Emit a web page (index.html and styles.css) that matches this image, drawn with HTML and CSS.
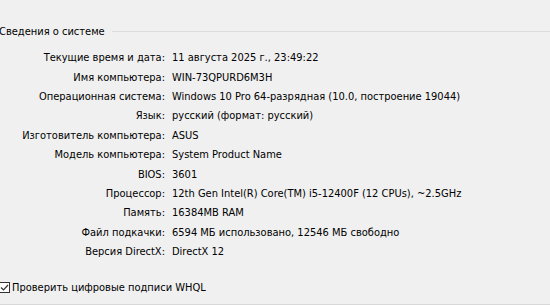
FILE: index.html
```html
<!DOCTYPE html>
<html>
<head>
    <title>Сведения о системе</title>
    <link rel="stylesheet" href="styles.css">
</head>
<body>

<div class="sysinfo">
    <div class="group-title">
        <span>Сведения о системе</span>
        <div class="group-line"></div>
    </div>

    <div class="info-grid">
        <div class="label">Текущие время и дата:</div>
        <div class="value">11 августа 2025 г., 23:49:22</div>

        <div class="label">Имя компьютера:</div>
        <div class="value">WIN-73QPURD6M3H</div>

        <div class="label">Операционная система:</div>
        <div class="value">Windows 10 Pro 64-разрядная (10.0, построение 19044)</div>

        <div class="label">Язык:</div>
        <div class="value">русский (формат: русский)</div>

        <div class="label">Изготовитель компьютера:</div>
        <div class="value">ASUS</div>

        <div class="label">Модель компьютера:</div>
        <div class="value">System Product Name</div>

        <div class="label">BIOS:</div>
        <div class="value">3601</div>

        <div class="label">Процессор:</div>
        <div class="value">12th Gen Intel(R) Core(TM) i5-12400F (12 CPUs), ~2.5GHz</div>

        <div class="label">Память:</div>
        <div class="value">16384MB RAM</div>

        <div class="label">Файл подкачки:</div>
        <div class="value">6594 МБ использовано, 12546 МБ свободно</div>

        <div class="label">Версия DirectX:</div>
        <div class="value">DirectX 12</div>
    </div>

    <div class="whql">
        <span class="checkbox">
            <svg width="11" height="11" viewBox="0 0 11 11">
                <path d="M2 5.5 L4.5 8 L9 3" fill="none" stroke="#333" stroke-width="1.2"/>
            </svg>
        </span>
        <label>Проверить цифровые подписи WHQL</label>
    </div>
</div>

</body>
</html>
```

FILE: styles.css
```css
body {
    margin: 0;
    background-color: #f0f0f0;
    font-family: "DejaVu Sans Condensed", "DejaVu Sans", sans-serif;
    font-stretch: condensed;
    font-size: 11px;
    color: #000;
    overflow: hidden;
}
.sysinfo {
    height: 305px;
    box-sizing: border-box;
    border-bottom: 1px solid #d8d8d8;
    padding-top: 23px;
}
.group-title {
    display: flex;
    align-items: center;
    margin-left: -1px;
    height: 16px;
}
.group-title span {
    padding-right: 7px;
}
.group-line {
    flex: 1;
    border-top: 1px solid #dcdcdc;
}
.info-grid {
    display: grid;
    grid-template-columns: 165px 1fr;
    grid-auto-rows: 19.4px;
    column-gap: 7px;
    margin-top: 9px;
    align-items: center;
}
.label {
    text-align: right;
    white-space: nowrap;
}
.value {
    white-space: nowrap;
}
.whql {
    display: flex;
    align-items: center;
    margin-top: 20px;
    margin-left: -1px;
}
.checkbox {
    width: 11px;
    height: 11px;
    border: 1px solid #333;
    background: #fff;
    box-sizing: border-box;
    display: flex;
    margin-right: 2px;
}
.checkbox svg {
    margin: -1px;
}
```
